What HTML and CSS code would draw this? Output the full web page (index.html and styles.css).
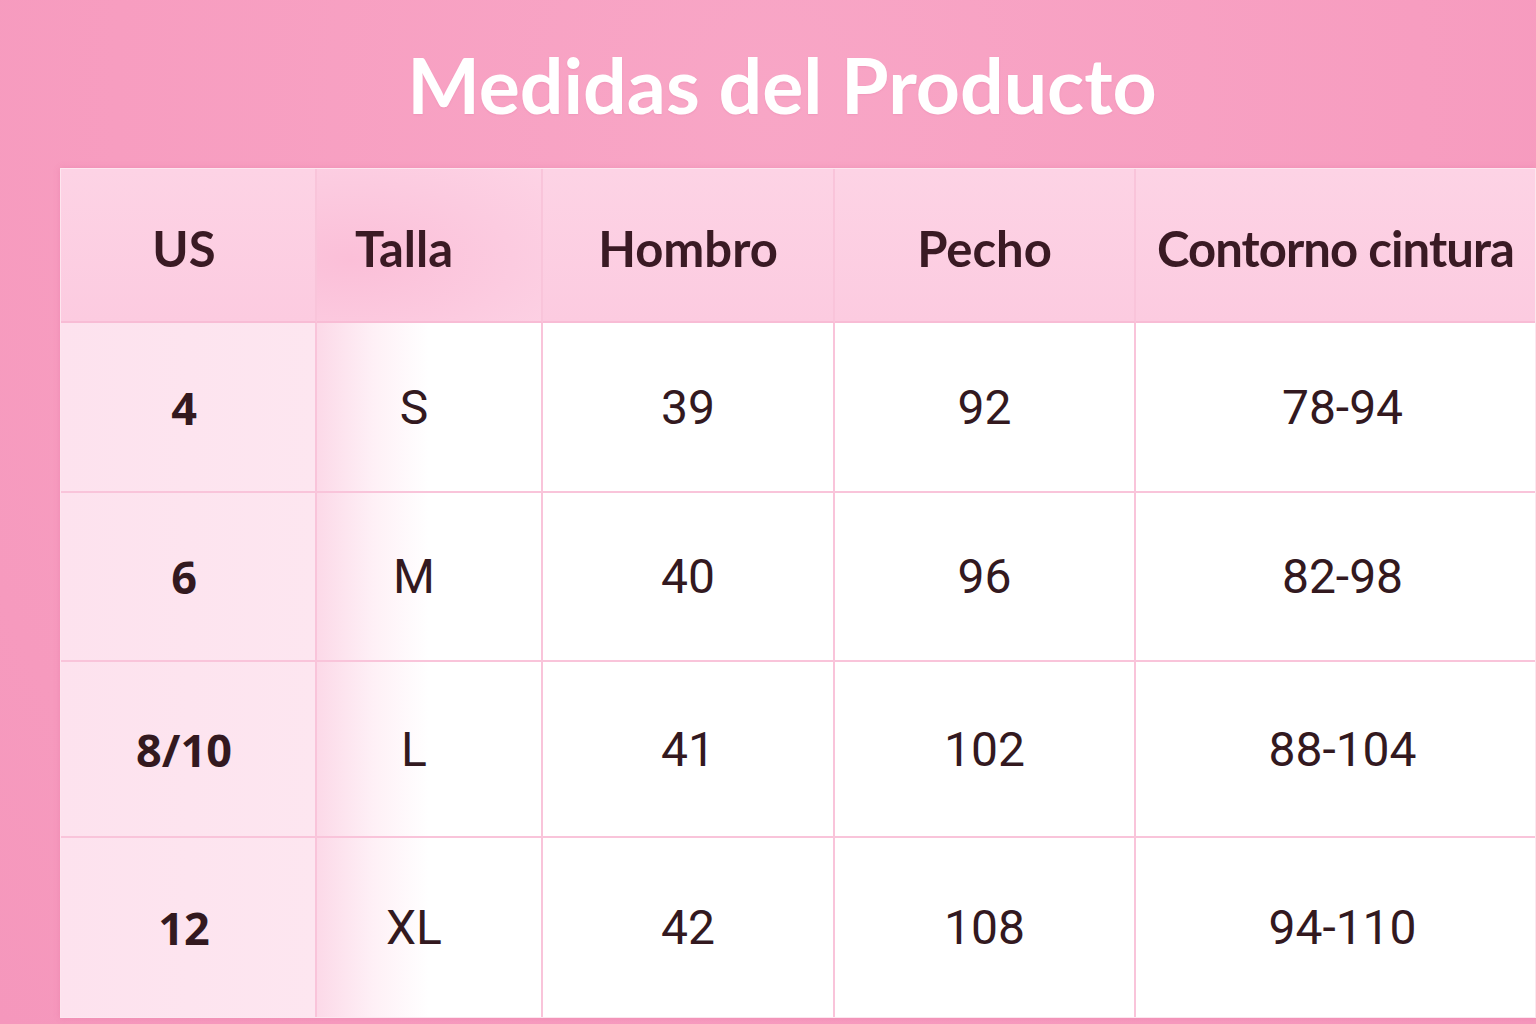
FILE: index.html
```html
<!DOCTYPE html>
<html lang="es">
<head>
<meta charset="utf-8">
<title>Medidas del Producto</title>
<link rel="stylesheet" href="styles.css">
</head>
<body>
<div class="page">
  <h1 class="title">Medidas del Producto</h1>
  <div class="table">
    <div class="cell head c1">US</div>
    <div class="cell head c2">Talla</div>
    <div class="cell head c3">Hombro</div>
    <div class="cell head c4">Pecho</div>
    <div class="cell head c5">Contorno cintura</div>

    <div class="cell us r1">4</div>
    <div class="cell talla r1">S</div>
    <div class="cell r1">39</div>
    <div class="cell r1">92</div>
    <div class="cell r1 last">78-94</div>

    <div class="cell us r2">6</div>
    <div class="cell talla r2">M</div>
    <div class="cell r2">40</div>
    <div class="cell r2">96</div>
    <div class="cell r2 last">82-98</div>

    <div class="cell us r3">8/10</div>
    <div class="cell talla r3">L</div>
    <div class="cell r3">41</div>
    <div class="cell r3">102</div>
    <div class="cell r3 last">88-104</div>

    <div class="cell us r4 bottom">12</div>
    <div class="cell talla r4 bottom">XL</div>
    <div class="cell r4 bottom">42</div>
    <div class="cell r4 bottom">108</div>
    <div class="cell r4 bottom last">94-110</div>
  </div>
</div>
</body>
</html>
```

FILE: styles.css
```css
html, body {
  margin: 0;
  padding: 0;
}
body {
  width: 1536px;
  height: 1024px;
  overflow: hidden;
  background: radial-gradient(ellipse at 50% 10%, #f8a6c6 0%, #f79dc0 60%, #f597bc 100%);
  font-family: "Lato", "Open Sans", sans-serif;
}
.page {
  display: flex;
  flex-direction: column;
  height: 1024px;
}
.title {
  margin: 0;
  height: 168px;
  display: flex;
  align-items: center;
  justify-content: center;
  padding-left: 28px;
  box-sizing: border-box;
  color: #ffffff;
  font-family: "Lato", sans-serif;
  font-weight: 700;
  font-size: 77px;
  text-shadow: 0 1px 2px rgba(200, 80, 130, 0.15);
}
.table {
  margin-left: 60px;
  width: 1474px;
  display: grid;
  grid-template-columns: 256px 226px 292px 301px 399px;
  grid-template-rows: 154px 170px 169px 176px 179px;
  background: #ffffff;
  box-shadow: 0 0 6px rgba(220, 90, 140, 0.25);
  border: 1px solid #fde6ef;
  box-sizing: content-box;
}
.cell {
  display: flex;
  align-items: center;
  justify-content: center;
  border-right: 2px solid #f9c4da;
  border-bottom: 2px solid #f9c4da;
  color: #33191f;
  font-family: "Roboto", "Open Sans", sans-serif;
  font-size: 48px;
  font-weight: 400;
  background: #ffffff;
}
.cell.last {
  border-right: none;
}
.cell.bottom {
  border-bottom: none;
}
.head {
  font-family: "Lato", sans-serif;
  font-weight: 700;
  font-size: 49px;
  padding-top: 6px;
  color: #3a1a24;
  background: linear-gradient(180deg, #fdd3e5 0%, #fccbe0 100%);
  border-bottom: 2px solid #f8bcd5;
}
.head.c1 {
  padding-right: 8px;
}
.head.c2 {
  padding-right: 50px;
  background: radial-gradient(ellipse at 15% 60%, #fbbfd8 0%, #fccbe0 60%, #fdd3e5 100%);
}
.head.c5 {
  border-right: none;
  padding-left: 0;
  letter-spacing: -0.9px;
}
.us {
  font-weight: 700;
  font-family: "Open Sans", sans-serif;
  font-size: 45px;
  padding-right: 8px;
  background: linear-gradient(90deg, #fde2ee 0%, #fde6f0 100%);
}
.talla {
  padding-right: 30px;
  background: linear-gradient(90deg, #fcd9e8 0%, #fef0f6 25%, #ffffff 50%);
}
.last {
  padding-left: 14px;
}
```
